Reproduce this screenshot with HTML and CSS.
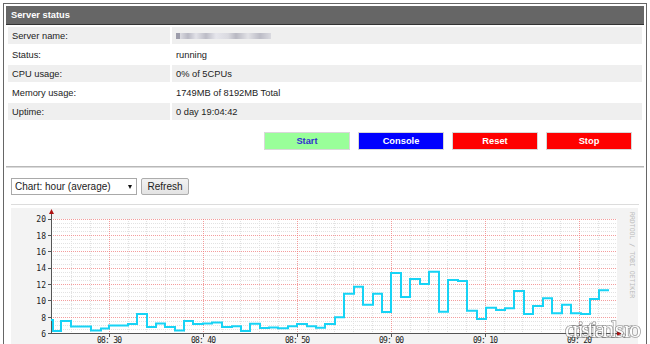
FILE: index.html
```html
<!DOCTYPE html>
<html lang="en">
<head>
    <meta charset="UTF-8">
    <title>Server status</title>
    <link rel="stylesheet" href="styles.css">
</head>
<body>
    <div class="panel">
        <div class="panel-title">Server status</div>

        <table class="status-table">
            <tr class="odd">
                <td class="label">Server name:</td>
                <td><span class="blurred"></span></td>
            </tr>
            <tr>
                <td class="label">Status:</td>
                <td>running</td>
            </tr>
            <tr class="odd">
                <td class="label">CPU usage:</td>
                <td>0% of 5CPUs</td>
            </tr>
            <tr>
                <td class="label">Memory usage:</td>
                <td>1749MB of 8192MB Total</td>
            </tr>
            <tr class="odd">
                <td class="label">Uptime:</td>
                <td>0 day 19:04:42</td>
            </tr>
        </table>

        <div class="actions">
            <button class="btn btn-start">Start</button>
            <button class="btn btn-console">Console</button>
            <button class="btn btn-reset">Reset</button>
            <button class="btn btn-stop">Stop</button>
        </div>

        <div class="separator"></div>

        <div class="chart-controls">
            <div class="select-wrap">
                <select class="chart-select">
                    <option>Chart: hour (average)</option>
                    <option>Chart: day (average)</option>
                    <option>Chart: week (average)</option>
                </select>
            </div>
            <button class="btn-refresh">Refresh</button>
        </div>

        <div class="chart-line"></div>

        <!-- rrdtool graph: cpu, last hour -->
        <svg class="chart" viewBox="11 208 627 150" width="627" height="150">
            <rect x="11" y="208" width="627" height="150" class="chart-back"/>
            <rect x="51" y="219" width="566" height="115" class="chart-canvas"/>

            <path class="grid-minor" d="M51,223.5H617M51,227.5H617M51,231.5H617M51,239.5H617M51,243.5H617M51,247.5H617M51,255.5H617M51,259.5H617M51,264.5H617M51,272.5H617M51,276.5H617M51,280.5H617M51,288.5H617M51,292.5H617M51,296.5H617M51,304.5H617M51,308.5H617M51,313.5H617M51,321.5H617M51,325.5H617M51,329.5H617
                M71.5,219V333M90.5,219V333M128.5,219V333M146.5,219V333M165.5,219V333M184.5,219V333M222.5,219V333M240.5,219V333M259.5,219V333M278.5,219V333M316.5,219V333M334.5,219V333M353.5,219V333M372.5,219V333M410.5,219V333M428.5,219V333M447.5,219V333M466.5,219V333M504.5,219V333M522.5,219V333M541.5,219V333M560.5,219V333M598.5,219V333"/>
            <path class="grid-major" d="M51,219.5H617M51,235.5H617M51,251.5H617M51,268.5H617M51,284.5H617M51,300.5H617M51,317.5H617
                M109.5,219V333M203.5,219V333M297.5,219V333M391.5,219V333M485.5,219V333M579.5,219V333"/>

            <path class="axis" d="M51.5,334V213M48,333.5H617
                M48,219.5H51M48,235.5H51M48,251.5H51M48,268.5H51M48,284.5H51M48,300.5H51M48,317.5H51
                M109.5,334V337M203.5,334V337M297.5,334V337M391.5,334V337M485.5,334V337M579.5,334V337"/>
            <path class="arrow" d="M49,214L51.5,209L54,214Z M617,331L622,333.5L617,336Z"/>

            <path class="data" d="M51,320H53V331H61V321H71V326.5H91V330.5H101V328.5H109V325.5H128V324H137V314H147V327H156V323.5H165V327H175V330.5H184V321H193V324H203V323.5H212V322.5H222V327H232V326.3H241V331H250V323.7H260V328H269V327.5H278V328.3H288V326.3H297V324H307V326.3H316V327.7H325V324H335V317.3H344V293.7H354V286.7H363V304.7H373V293.7H382V312H391V273H401V297H410V279H420V284H429V271.7H439V311.7H448V280H458V281H467V310.7H477V319H486V307.7H496V310H505V308.3H514V291H524V314H533V306H543V298.3H552V313.3H562V304.7H571V313.3H581V314H590V299H599V290.3H609"/>

            <g class="y-labels">
                <text x="46" y="222">20</text>
                <text x="46" y="238.5">18</text>
                <text x="46" y="254.5">16</text>
                <text x="46" y="271">14</text>
                <text x="46" y="287.5">12</text>
                <text x="46" y="303.5">10</text>
                <text x="46" y="320.5">8</text>
                <text x="46" y="336.5">6</text>
            </g>
            <g class="x-labels">
                <text x="97" y="342.5" textLength="25">08: 30</text>
                <text x="191" y="342.5" textLength="25">08: 40</text>
                <text x="285" y="342.5" textLength="25">08: 50</text>
                <text x="379" y="342.5" textLength="25">09: 00</text>
                <text x="473" y="342.5" textLength="25">09: 10</text>
                <text x="567" y="342.5" textLength="25">09: 20</text>
            </g>
            <text class="credit" transform="translate(629.5,212) rotate(90)">RRDTOOL / TOBI OETIKER</text>
            <text class="watermark" x="565" y="337" textLength="76">cristianls.ro</text>
        </svg>
    </div>
</body>
</html>
```

FILE: styles.css
```css
html {
    overflow: hidden;
}

body {
    margin: 3px;
    font-family: "Liberation Sans", Arial, sans-serif;
    font-size: 9.3px;
    color: #222;
    background: #fff;
}

.panel {
    border: 1px solid #666;
    padding: 2px;
}

.panel-title {
    background: #666;
    border-bottom: 1px solid #333;
    color: #fff;
    font-weight: bold;
    height: 18px;
    line-height: 18px;
    padding-left: 5px;
}

/* Status table */
.status-table {
    width: 100%;
    border-spacing: 2px;
    font-size: 9.3px;
}

.status-table td {
    height: 17px;
    padding: 0 4px;
    vertical-align: middle;
}

.status-table td.label {
    width: 154px;
}

.status-table tr.odd td {
    background: #efefef;
}

.blurred {
    display: inline-block;
    width: 95px;
    height: 6px;
    vertical-align: middle;
    background: linear-gradient(90deg, #9c9caa 0, #9c9caa 4px, #dcdce2 4px, #b9b9c4 12px, #e2e2e8 20px, #bcbcc6 30px, #e6e6ec 40px, #dadae0 52px, #b8b8c2 60px, #e2e2e6 72px, #bcbcc6 84px, #dadae0 95px);
    filter: blur(0.5px);
}

/* Buttons */
.actions {
    display: flex;
    justify-content: flex-end;
    gap: 8px;
    padding: 10px 12px 0 0;
}

.btn {
    box-sizing: border-box;
    width: 86px;
    height: 18px;
    padding: 0;
    border: 1px solid #d8d8d8;
    font-family: "Liberation Sans", Arial, sans-serif;
    font-size: 9.3px;
    font-weight: bold;
    color: #fff;
    cursor: pointer;
}

.btn-start {
    background: #99ff99;
    color: #3030d0;
}

.btn-console {
    background: #0000ff;
}

.btn-reset,
.btn-stop {
    background: #ff0000;
}

.separator {
    margin-top: 16px;
    border-top: 1px solid #b8b8b8;
    border-bottom: 1px solid #dadada;
}

/* Chart controls */
.chart-controls {
    display: flex;
    gap: 4px;
    margin-top: 10px;
    padding-left: 5px;
}

.select-wrap {
    position: relative;
    width: 126px;
    height: 17px;
}

.select-wrap::after {
    content: "";
    position: absolute;
    right: 5px;
    top: 7px;
    border-left: 2.5px solid transparent;
    border-right: 2.5px solid transparent;
    border-top: 4px solid #111;
    pointer-events: none;
}

.chart-select {
    appearance: none;
    box-sizing: border-box;
    width: 126px;
    height: 17px;
    margin: 0;
    padding: 0 0 0 3px;
    border: 1px solid #a9a9a9;
    border-radius: 0;
    background: #fff;
    font-family: "Liberation Sans", Arial, sans-serif;
    font-size: 10px;
    color: #222;
}

.btn-refresh {
    box-sizing: border-box;
    width: 48px;
    height: 17px;
    margin: 0;
    padding: 0;
    border: 1px solid #acacac;
    border-radius: 2px;
    background: linear-gradient(#f2f2f2, #e3e3e3);
    font-family: "Liberation Sans", Arial, sans-serif;
    font-size: 10px;
    color: #222;
}

.chart-line {
    margin: 9px 5px 0;
    border-top: 1px solid #dcdcdc;
}

/* rrdtool graph */
.chart {
    display: block;
    margin: 3px 0 0 5px;
    overflow: visible;
}

.chart-back {
    fill: #f3f3f3;
}

.chart-canvas {
    fill: #fff;
}

.grid-minor {
    fill: none;
    stroke: #e2e2e2;
    stroke-width: 1;
    stroke-dasharray: 1 1;
}

.grid-major {
    fill: none;
    stroke: #f07c7c;
    stroke-width: 1;
    stroke-dasharray: 1 1;
    opacity: 0.75;
}

.axis {
    fill: none;
    stroke: #555;
    stroke-width: 1;
}

.arrow {
    fill: #b01010;
}

.data {
    fill: none;
    stroke: #17d3f5;
    stroke-width: 2;
}

.y-labels text {
    font-family: "DejaVu Sans Mono", monospace;
    font-size: 8px;
    fill: #222;
    text-anchor: end;
}

.x-labels text {
    font-family: "DejaVu Sans Mono", monospace;
    font-size: 8px;
    fill: #222;
}

.credit {
    font-family: "DejaVu Sans Mono", monospace;
    font-size: 6.5px;
    fill: #bbb;
}

.watermark {
    font-family: "Liberation Serif", serif;
    font-size: 24px;
    fill: #fff;
    stroke: rgba(60, 60, 60, 0.55);
    stroke-width: 1.6px;
    paint-order: stroke;
    opacity: 0.9;
}
```
